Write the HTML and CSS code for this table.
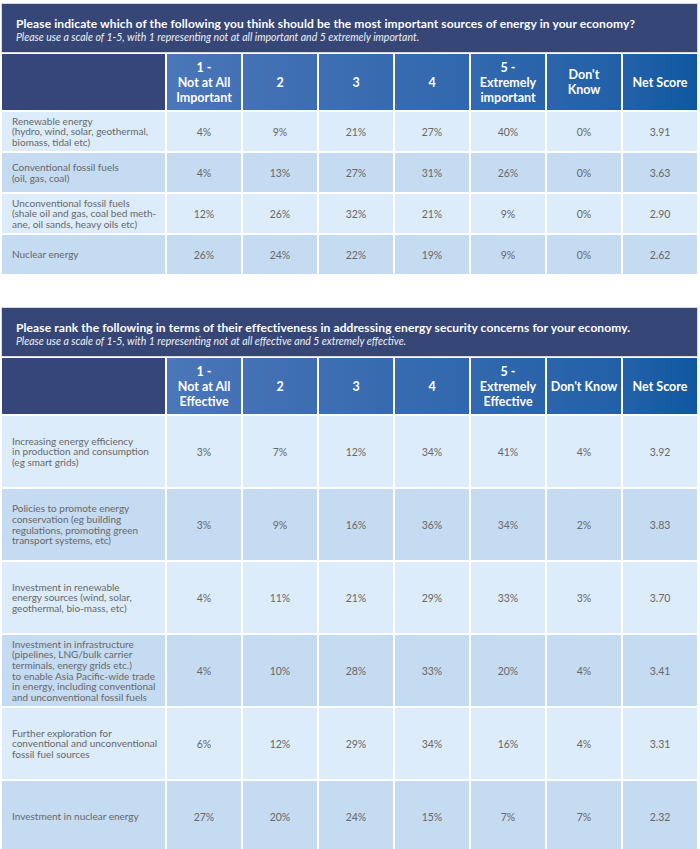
FILE: index.html
```html
<!DOCTYPE html>
<html lang="en">
<head>
<meta charset="utf-8">
<title>Energy survey</title>
<link rel="stylesheet" href="styles.css">
</head>
<body>
<section class="survey">
  <div class="title">
    <h2>Please indicate which of the following you think should be the most important sources of energy in your economy?</h2>
    <p>Please use a scale of 1-5, with 1 representing not at all important and 5 extremely important.</p>
  </div>
  <div class="grid short">
    <div class="hd blank"></div>
    <div class="hd c1">1 -<br>Not at All<br>Important</div>
    <div class="hd c2">2</div>
    <div class="hd c3">3</div>
    <div class="hd c4">4</div>
    <div class="hd c5">5 -<br>Extremely<br>important</div>
    <div class="hd c6">Don't<br>Know</div>
    <div class="hd c7">Net Score</div>

    <div class="lbl odd">Renewable energy<br>(hydro, wind, solar, geothermal,<br>biomass, tidal etc)</div>
    <div class="val odd">4%</div><div class="val odd">9%</div><div class="val odd">21%</div><div class="val odd">27%</div><div class="val odd">40%</div><div class="val odd">0%</div><div class="val odd">3.91</div>

    <div class="lbl even">Conventional fossil fuels<br>(oil, gas, coal)</div>
    <div class="val even">4%</div><div class="val even">13%</div><div class="val even">27%</div><div class="val even">31%</div><div class="val even">26%</div><div class="val even">0%</div><div class="val even">3.63</div>

    <div class="lbl odd">Unconventional fossil fuels<br>(shale oil and gas, coal bed meth-<br>ane, oil sands, heavy oils etc)</div>
    <div class="val odd">12%</div><div class="val odd">26%</div><div class="val odd">32%</div><div class="val odd">21%</div><div class="val odd">9%</div><div class="val odd">0%</div><div class="val odd">2.90</div>

    <div class="lbl even">Nuclear energy</div>
    <div class="val even">26%</div><div class="val even">24%</div><div class="val even">22%</div><div class="val even">19%</div><div class="val even">9%</div><div class="val even">0%</div><div class="val even">2.62</div>
  </div>
</section>

<section class="survey second">
  <div class="title">
    <h2>Please rank the following in terms of their effectiveness in addressing energy security concerns for your economy.</h2>
    <p>Please use a scale of 1-5, with 1 representing not at all effective and 5 extremely effective.</p>
  </div>
  <div class="grid tall">
    <div class="hd blank"></div>
    <div class="hd c1">1 -<br>Not at All<br>Effective</div>
    <div class="hd c2">2</div>
    <div class="hd c3">3</div>
    <div class="hd c4">4</div>
    <div class="hd c5">5 -<br>Extremely<br>Effective</div>
    <div class="hd c6">Don't Know</div>
    <div class="hd c7">Net Score</div>

    <div class="lbl odd">Increasing energy efficiency<br>in production and consumption<br>(eg smart grids)</div>
    <div class="val odd">3%</div><div class="val odd">7%</div><div class="val odd">12%</div><div class="val odd">34%</div><div class="val odd">41%</div><div class="val odd">4%</div><div class="val odd">3.92</div>

    <div class="lbl even">Policies to promote energy<br>conservation (eg building<br>regulations, promoting green<br>transport systems, etc)</div>
    <div class="val even">3%</div><div class="val even">9%</div><div class="val even">16%</div><div class="val even">36%</div><div class="val even">34%</div><div class="val even">2%</div><div class="val even">3.83</div>

    <div class="lbl odd">Investment in renewable<br>energy sources (wind, solar,<br>geothermal, bio-mass, etc)</div>
    <div class="val odd">4%</div><div class="val odd">11%</div><div class="val odd">21%</div><div class="val odd">29%</div><div class="val odd">33%</div><div class="val odd">3%</div><div class="val odd">3.70</div>

    <div class="lbl even">Investment in infrastructure<br>(pipelines, LNG/bulk carrier<br>terminals, energy grids etc.)<br>to enable Asia Pacific-wide trade<br>in energy, including conventional<br>and unconventional fossil fuels</div>
    <div class="val even">4%</div><div class="val even">10%</div><div class="val even">28%</div><div class="val even">33%</div><div class="val even">20%</div><div class="val even">4%</div><div class="val even">3.41</div>

    <div class="lbl odd">Further exploration for<br>conventional and unconventional<br>fossil fuel sources</div>
    <div class="val odd">6%</div><div class="val odd">12%</div><div class="val odd">29%</div><div class="val odd">34%</div><div class="val odd">16%</div><div class="val odd">4%</div><div class="val odd">3.31</div>

    <div class="lbl even">Investment in nuclear energy</div>
    <div class="val even">27%</div><div class="val even">20%</div><div class="val even">24%</div><div class="val even">15%</div><div class="val even">7%</div><div class="val even">7%</div><div class="val even">2.32</div>
  </div>
</section>
</body>
</html>
```
FILE: styles.css
```css
html, body {
  margin: 0;
  padding: 0;
  background: #ffffff;
}
body {
  padding: 4px 0 0 2px;
  font-family: Lato, "Open Sans", "Liberation Sans", sans-serif;
}
.survey {
  width: 695px;
}
.survey.second {
  margin-top: 34px;
}
.title {
  background: #364677;
  height: 48px;
  box-sizing: border-box;
  padding: 12px 14px 0 14px;
  color: #ffffff;
  box-shadow: 0 0 0 1px #d4d9e4;
}
.title h2 {
  margin: 0;
  font-size: 12px;
  font-weight: 700;
  line-height: 15px;
  letter-spacing: 0.1px;
}
.title p {
  margin: 0;
  font-size: 10.5px;
  font-style: italic;
  line-height: 13px;
  color: #eef1f8;
}
.grid {
  display: grid;
  grid-template-columns: 163px repeat(7, 74px);
  gap: 2px;
  margin-top: 2px;
}
.grid.short {
  grid-template-rows: 56px repeat(4, 39px);
}
.grid.tall {
  grid-template-rows: 56px repeat(6, 71px);
}
.hd {
  display: flex;
  align-items: center;
  justify-content: center;
  text-align: center;
  color: #ffffff;
  font-weight: 700;
  font-size: 12.5px;
  line-height: 15px;
}
.hd.blank { background: #36457a; }
.hd.c1 { background: linear-gradient(90deg, #4a77b8, #4371b4); }
.hd.c2 { background: linear-gradient(90deg, #4472b5, #3c6db1); }
.hd.c3 { background: linear-gradient(90deg, #3e6fb3, #366aaf); }
.hd.c4 { background: linear-gradient(90deg, #386cb1, #3067ad); }
.hd.c5 { background: linear-gradient(90deg, #3268ae, #2963aa); }
.hd.c6 { background: linear-gradient(90deg, #2c65ac, #2160a7); }
.hd.c7 { background: linear-gradient(90deg, #2561a9, #0e58a0); }
.lbl {
  display: flex;
  align-items: center;
  padding: 0 2px 0 10px;
  font-size: 10px;
  line-height: 10.6px;
  color: #686868;
  white-space: nowrap;
}
.val {
  display: flex;
  align-items: center;
  justify-content: center;
  font-size: 10.5px;
  color: #686868;
}
.odd { background: #dcecfa; }
.even { background: #c4dbf2; }
```
